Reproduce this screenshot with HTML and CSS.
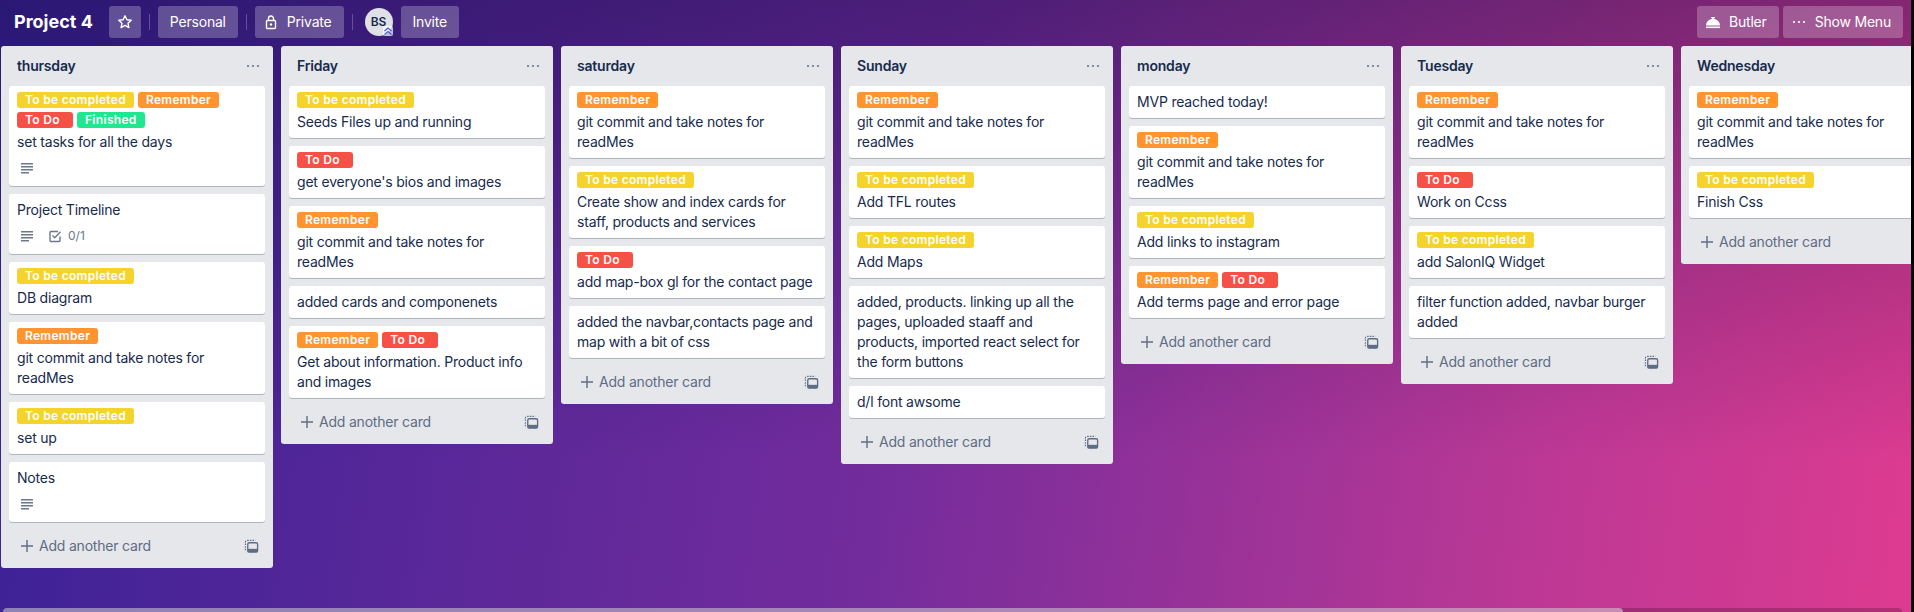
FILE: index.html
```
<!DOCTYPE html>
<html>
<head>
<meta charset="utf-8"/>
<title>Project 4</title>
<link rel="stylesheet" href="styles.css">
</head>
<body>
<svg class="defs" width="0" height="0">
  <symbol id="i-desc" viewBox="0 0 16 16"><path d="M2 3h12v1.4H2zM2 6h12v1.4H2zM2 9h12v1.4H2zM2 12h8v1.4H2z" fill="currentColor"/></symbol>
  <symbol id="i-check" viewBox="0 0 16 16"><path d="M13 8.5v4a1 1 0 0 1-1 1H4a1 1 0 0 1-1-1v-8a1 1 0 0 1 1-1h7" fill="none" stroke="currentColor" stroke-width="1.4"/><path d="M5.5 7.5l2.3 2.3 5.7-6" fill="none" stroke="currentColor" stroke-width="1.4"/></symbol>
  <symbol id="i-plus" viewBox="0 0 16 16"><path d="M7.3 2h1.4v5.3H14v1.4H8.7V14H7.3V8.7H2V7.3h5.3z" fill="currentColor"/></symbol>
  <symbol id="i-template" viewBox="0 0 16 16"><path d="M1.5 12V3.5a2 2 0 0 1 2-2H12" fill="none" stroke="currentColor" stroke-width="1.2" stroke-dasharray="1.6 1.2"/><rect x="4" y="4" width="10.5" height="10" rx="1.5" fill="none" stroke="currentColor" stroke-width="1.4"/><rect x="4" y="10.5" width="10.5" height="3.5" fill="currentColor"/></symbol>
  <symbol id="i-dots" viewBox="0 0 16 16"><circle cx="3" cy="8" r="1.1" fill="currentColor"/><circle cx="8" cy="8" r="1.1" fill="currentColor"/><circle cx="13" cy="8" r="1.1" fill="currentColor"/></symbol>
</svg>

<div class="board">
  <header class="board-header">
    <h1 class="board-name">Project 4</h1>
    <button class="hbtn hbtn-star"><svg class="ico" viewBox="0 0 16 16"><path d="M8 1.8l1.9 4 4.3.5-3.2 3 .9 4.3L8 11.4l-3.9 2.2.9-4.3-3.2-3 4.3-.5z" fill="none" stroke="currentColor" stroke-width="1.4" stroke-linejoin="round"/></svg></button>
    <span class="sep"></span>
    <button class="hbtn hbtn-personal">Personal</button>
    <span class="sep"></span>
    <button class="hbtn hbtn-ico"><svg class="ico" viewBox="0 0 16 16"><rect x="3.5" y="6.5" width="9" height="8" rx="1" fill="none" stroke="currentColor" stroke-width="1.4"/><path d="M5.5 6.5V4.5a2.5 2.5 0 0 1 5 0v2" fill="none" stroke="currentColor" stroke-width="1.4"/><circle cx="8" cy="10.5" r="1.2" fill="currentColor"/></svg>Private</button>
    <span class="sep"></span>
    <span class="avatar">BS<svg class="avatar-badge" viewBox="0 0 10 10"><path d="M1.5 5L5 2l3.5 3M1.5 8.5L5 5.5l3.5 3" fill="none" stroke="#3f5bd8" stroke-width="1.2"/></svg></span>
    <button class="hbtn">Invite</button>
    <div class="header-right">
      <button class="hbtn hbtn-ico"><svg class="ico" viewBox="0 0 16 16"><path d="M1 11.5a7 7 0 0 1 5.8-6.6V4h-.8V3h4v1h-.8v.9A7 7 0 0 1 15 11.5z" fill="currentColor"/><rect x="1" y="12.5" width="14" height="1.6" fill="currentColor"/></svg>Butler</button>
      <button class="hbtn hbtn-ico"><svg class="ico"><use href="#i-dots"/></svg>Show Menu</button>
    </div>
  </header>

  <div class="lists">
    <section class="list">
      <div class="list-head"><h2>thursday</h2><svg class="ico dots"><use href="#i-dots"/></svg></div>
      <article class="card">
        <div class="labels"><span class="label yellow">To be completed</span><span class="label orange">Remember</span><span class="label red">To Do</span><span class="label green">Finished</span></div>
        <p>set tasks for all the days</p>
        <div class="badges"><svg class="badge-ico"><use href="#i-desc"/></svg></div>
      </article>
      <article class="card">
        <p>Project Timeline</p>
        <div class="badges"><svg class="badge-ico"><use href="#i-desc"/></svg><svg class="badge-ico"><use href="#i-check"/></svg><span class="badge-text">0/1</span></div>
      </article>
      <article class="card">
        <div class="labels"><span class="label yellow">To be completed</span></div>
        <p>DB diagram</p>
      </article>
      <article class="card">
        <div class="labels"><span class="label orange">Remember</span></div>
        <p>git commit and take notes for readMes</p>
      </article>
      <article class="card">
        <div class="labels"><span class="label yellow">To be completed</span></div>
        <p>set up</p>
      </article>
      <article class="card">
        <p>Notes</p>
        <div class="badges"><svg class="badge-ico"><use href="#i-desc"/></svg></div>
      </article>
      <div class="add-card"><svg class="ico"><use href="#i-plus"/></svg><span>Add another card</span><svg class="ico tmpl"><use href="#i-template"/></svg></div>
    </section>

    <section class="list">
      <div class="list-head"><h2>Friday</h2><svg class="ico dots"><use href="#i-dots"/></svg></div>
      <article class="card">
        <div class="labels"><span class="label yellow">To be completed</span></div>
        <p>Seeds Files up and running</p>
      </article>
      <article class="card">
        <div class="labels"><span class="label red">To Do</span></div>
        <p>get everyone's bios and images</p>
      </article>
      <article class="card">
        <div class="labels"><span class="label orange">Remember</span></div>
        <p>git commit and take notes for readMes</p>
      </article>
      <article class="card"><p>added cards and componenets</p></article>
      <article class="card">
        <div class="labels"><span class="label orange">Remember</span><span class="label red">To Do</span></div>
        <p>Get about information. Product info and images</p>
      </article>
      <div class="add-card"><svg class="ico"><use href="#i-plus"/></svg><span>Add another card</span><svg class="ico tmpl"><use href="#i-template"/></svg></div>
    </section>

    <section class="list">
      <div class="list-head"><h2>saturday</h2><svg class="ico dots"><use href="#i-dots"/></svg></div>
      <article class="card">
        <div class="labels"><span class="label orange">Remember</span></div>
        <p>git commit and take notes for readMes</p>
      </article>
      <article class="card">
        <div class="labels"><span class="label yellow">To be completed</span></div>
        <p>Create show and index cards for staff, products and services</p>
      </article>
      <article class="card">
        <div class="labels"><span class="label red">To Do</span></div>
        <p>add map-box gl for the contact page</p>
      </article>
      <article class="card"><p>added the navbar,contacts page and map with a bit of css</p></article>
      <div class="add-card"><svg class="ico"><use href="#i-plus"/></svg><span>Add another card</span><svg class="ico tmpl"><use href="#i-template"/></svg></div>
    </section>

    <section class="list">
      <div class="list-head"><h2>Sunday</h2><svg class="ico dots"><use href="#i-dots"/></svg></div>
      <article class="card">
        <div class="labels"><span class="label orange">Remember</span></div>
        <p>git commit and take notes for readMes</p>
      </article>
      <article class="card">
        <div class="labels"><span class="label yellow">To be completed</span></div>
        <p>Add TFL routes</p>
      </article>
      <article class="card">
        <div class="labels"><span class="label yellow">To be completed</span></div>
        <p>Add Maps</p>
      </article>
      <article class="card"><p>added, products. linking up all the pages, uploaded staaff and products, imported react select for the form buttons</p></article>
      <article class="card"><p>d/l font awsome</p></article>
      <div class="add-card"><svg class="ico"><use href="#i-plus"/></svg><span>Add another card</span><svg class="ico tmpl"><use href="#i-template"/></svg></div>
    </section>

    <section class="list">
      <div class="list-head"><h2>monday</h2><svg class="ico dots"><use href="#i-dots"/></svg></div>
      <article class="card"><p>MVP reached today!</p></article>
      <article class="card">
        <div class="labels"><span class="label orange">Remember</span></div>
        <p>git commit and take notes for readMes</p>
      </article>
      <article class="card">
        <div class="labels"><span class="label yellow">To be completed</span></div>
        <p>Add links to instagram</p>
      </article>
      <article class="card">
        <div class="labels"><span class="label orange">Remember</span><span class="label red">To Do</span></div>
        <p>Add terms page and error page</p>
      </article>
      <div class="add-card"><svg class="ico"><use href="#i-plus"/></svg><span>Add another card</span><svg class="ico tmpl"><use href="#i-template"/></svg></div>
    </section>

    <section class="list">
      <div class="list-head"><h2>Tuesday</h2><svg class="ico dots"><use href="#i-dots"/></svg></div>
      <article class="card">
        <div class="labels"><span class="label orange">Remember</span></div>
        <p>git commit and take notes for readMes</p>
      </article>
      <article class="card">
        <div class="labels"><span class="label red">To Do</span></div>
        <p>Work on Ccss</p>
      </article>
      <article class="card">
        <div class="labels"><span class="label yellow">To be completed</span></div>
        <p>add SalonIQ Widget</p>
      </article>
      <article class="card"><p>filter function added, navbar burger added</p></article>
      <div class="add-card"><svg class="ico"><use href="#i-plus"/></svg><span>Add another card</span><svg class="ico tmpl"><use href="#i-template"/></svg></div>
    </section>

    <section class="list">
      <div class="list-head"><h2>Wednesday</h2><svg class="ico dots"><use href="#i-dots"/></svg></div>
      <article class="card">
        <div class="labels"><span class="label orange">Remember</span></div>
        <p>git commit and take notes for readMes</p>
      </article>
      <article class="card">
        <div class="labels"><span class="label yellow">To be completed</span></div>
        <p>Finish Css</p>
      </article>
      <div class="add-card"><svg class="ico"><use href="#i-plus"/></svg><span>Add another card</span><svg class="ico tmpl"><use href="#i-template"/></svg></div>
    </section>
  </div>

  <div class="scroll"><div class="scroll-thumb"></div></div>
</div>
</body>
</html>
```

FILE: styles.css
```
html, body {
  margin: 0;
  height: 100%;
  overflow: hidden;
}
body {
  background: #000;
  font-family: Inter, "Noto Sans", sans-serif;
  font-size: 14px;
  line-height: 20px;
  letter-spacing: -.2px;
  color: #172b4d;
}
.defs {
  display: block;
}
.board {
  position: relative;
  width: 1911px;
  height: 612px;
  overflow: hidden;
  display: flex;
  flex-direction: column;
  background:
    linear-gradient(to bottom, rgba(20, 10, 70, .42), rgba(20, 10, 70, 0) 75%),
    linear-gradient(98deg, #3a2296 0%, #742c9c 48%, #bb3895 80%, #dd3b90 100%);
}
.board-header {
  display: flex;
  align-items: center;
  flex: none;
  height: 46px;
  padding: 0 8px 2px 14px;
  box-sizing: border-box;
}
.board-name {
  margin: 0 16px 0 0;
  font-size: 18px;
  line-height: 32px;
  font-weight: 700;
  letter-spacing: 0;
  color: #fff;
}
.hbtn {
  display: flex;
  align-items: center;
  height: 32px;
  padding: 0 12px;
  margin: 0;
  border: 0;
  border-radius: 3px;
  background: rgba(255, 255, 255, .24);
  color: #fff;
  font: 14px/20px Inter, "Noto Sans", sans-serif;
  letter-spacing: -.2px;
}
.hbtn-star {
  padding: 0 8px;
}
.hbtn-personal {
  width: 80px;
  padding: 0;
  justify-content: center;
}
.hbtn-ico {
  padding-left: 8px;
}
.ico {
  width: 16px;
  height: 16px;
  flex: none;
}
.hbtn-ico .ico {
  margin-right: 8px;
}
.sep {
  width: 1px;
  height: 16px;
  margin: 0 8px;
  background: rgba(255, 255, 255, .24);
}
.avatar {
  position: relative;
  width: 28px;
  height: 28px;
  margin: 0 8px 0 4px;
  border-radius: 50%;
  background: #dfe1e6;
  color: #172b4d;
  font-size: 12px;
  font-weight: 600;
  line-height: 28px;
  letter-spacing: 0;
  text-align: center;
}
.avatar-badge {
  position: absolute;
  right: 0;
  bottom: 0;
  width: 10px;
  height: 10px;
  border-radius: 2px;
  background: rgba(255, 255, 255, .7);
}
.header-right {
  display: flex;
  gap: 4px;
  margin-left: auto;
}
.lists {
  flex: 1;
  display: flex;
  align-items: flex-start;
  gap: 8px;
  padding-left: 1px;
}
.list {
  flex: none;
  width: 272px;
  box-sizing: border-box;
  padding: 0 8px;
  background: #e6e7eb;
  border-radius: 3px;
}
.list-head {
  display: flex;
  align-items: center;
  justify-content: space-between;
  height: 40px;
  padding: 0 4px 0 8px;
}
.list-head h2 {
  margin: 0;
  font-size: 14px;
  line-height: 20px;
  font-weight: 600;
}
.dots {
  color: #6b778c;
}
.card {
  margin-bottom: 8px;
  padding: 6px 8px 2px;
  background: #fff;
  border-radius: 3px;
  box-shadow: 0 1px 0 rgba(9, 30, 66, .25);
}
.card p {
  margin: 0 0 4px;
}
.labels {
  display: flex;
  flex-wrap: wrap;
  gap: 4px;
  margin-bottom: 4px;
}
.label {
  min-width: 40px;
  padding: 0 8px;
  border-radius: 3px;
  color: #fff;
  font-size: 12px;
  line-height: 16px;
  font-weight: 600;
  letter-spacing: .3px;
}
.yellow { background: #f5d32d; }
.orange { background: #ff9431; }
.red { background: #f55146; }
.green { background: #1fe78f; }
.badges {
  display: flex;
  align-items: center;
  height: 20px;
  margin-top: 6px;
  padding: 0 0 6px 2px;
  color: #6b778c;
}
.badge-ico {
  width: 16px;
  height: 16px;
  margin-right: 12px;
}
.badge-ico + .badge-text {
  margin-left: -7px;
  font-size: 12px;
  letter-spacing: 0;
}
.add-card {
  display: flex;
  align-items: center;
  height: 32px;
  margin: 0 0 6px;
  padding: 0 6px 0 10px;
  color: #5e6c84;
}
.add-card .ico {
  margin-right: 4px;
}
.add-card .tmpl {
  margin: 0 0 0 auto;
  width: 15px;
  height: 15px;
}
.scroll {
  position: absolute;
  left: 3px;
  right: 9px;
  top: 608px;
  height: 4px;
  border-radius: 4px 4px 0 0;
  background: rgba(0, 0, 0, .2);
}
.scroll-thumb {
  width: 1620px;
  height: 4px;
  border-radius: 4px 4px 0 0;
  background: rgba(255, 255, 255, .45);
}
```
